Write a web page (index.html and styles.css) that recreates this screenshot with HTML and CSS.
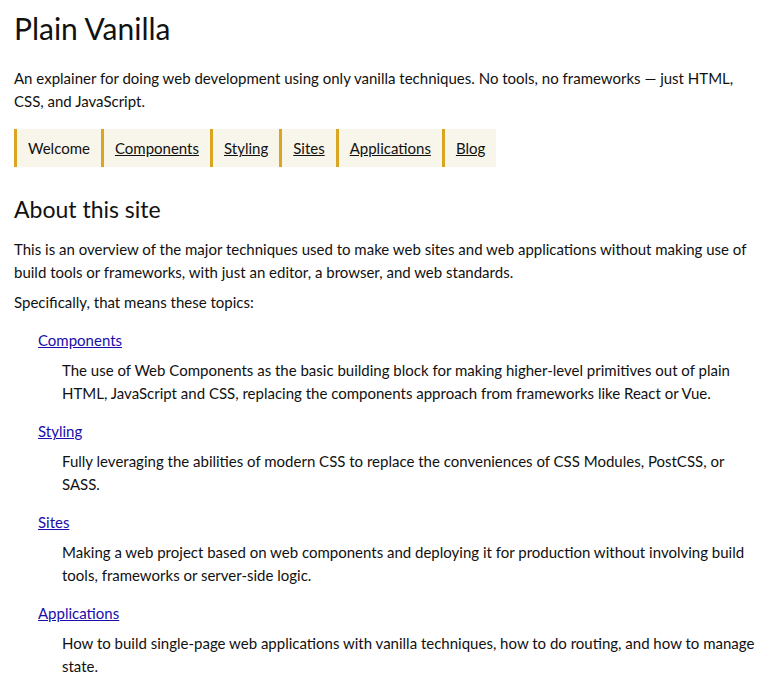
FILE: index.html
```html
<!DOCTYPE html>
<html lang="en">
<head>
<meta charset="utf-8">
<title>Plain Vanilla</title>
<link rel="stylesheet" href="styles.css">
</head>
<body>
<header class="site-header">
  <h1 class="title">Plain Vanilla</h1>
  <p class="lead">An explainer for doing web development using only vanilla techniques. No tools, no frameworks — just HTML, CSS, and JavaScript.</p>
  <nav class="tabs">
    <a class="tab current">Welcome</a>
    <a class="tab" href="#components">Components</a>
    <a class="tab" href="#styling">Styling</a>
    <a class="tab" href="#sites">Sites</a>
    <a class="tab" href="#applications">Applications</a>
    <a class="tab" href="#blog">Blog</a>
  </nav>
</header>
<main class="content">
  <h2 class="section-title">About this site</h2>
  <p class="text">This is an overview of the major techniques used to make web sites and web applications without making use of build tools or frameworks, with just an editor, a browser, and web standards.</p>
  <p class="text">Specifically, that means these topics:</p>
  <dl class="topics">
    <dt class="topic"><a href="#components">Components</a></dt>
    <dd class="desc">The use of Web Components as the basic building block for making higher-level primitives out of plain HTML, JavaScript and CSS, replacing the components approach from frameworks like React or Vue.</dd>
    <dt class="topic"><a href="#styling">Styling</a></dt>
    <dd class="desc">Fully leveraging the abilities of modern CSS to replace the conveniences of CSS Modules, PostCSS, or SASS.</dd>
    <dt class="topic"><a href="#sites">Sites</a></dt>
    <dd class="desc">Making a web project based on web components and deploying it for production without involving build tools, frameworks or server-side logic.</dd>
    <dt class="topic"><a href="#applications">Applications</a></dt>
    <dd class="desc">How to build single-page web applications with vanilla techniques, how to do routing, and how to manage state.</dd>
  </dl>
</main>
</body>
</html>
```
FILE: styles.css
```css
html, body {
  margin: 0;
  padding: 0;
  background: #fff;
}
body {
  font-family: Lato, "Open Sans", sans-serif;
  font-size: 15px;
  line-height: 1.5;
  color: #111;
  padding: 0 0 0 14px;
}
.title {
  font-size: 30px;
  font-weight: 400;
  line-height: 40px;
  margin: 8px 0 0;
}
.lead {
  margin: 19px 0 17px;
}
.tabs {
  display: inline-flex;
  background: #f8f5ea;
}
.tab {
  border-left: 3px solid #daa520;
  padding: 8px 11px;
  color: #111;
  line-height: 22px;
}
.tab.current {
  text-decoration: none;
}
.section-title {
  font-size: 23px;
  font-weight: 400;
  line-height: 30px;
  margin: 27px 0 14px;
}
.text {
  margin: 0 0 7.5px;
}
.topics {
  margin: 16px 0 0 24px;
}
.topic {
  margin: 0;
}
.topic a {
  color: #1a0dab;
}
.desc {
  margin: 7.5px 0 16px 24px;
}
```
